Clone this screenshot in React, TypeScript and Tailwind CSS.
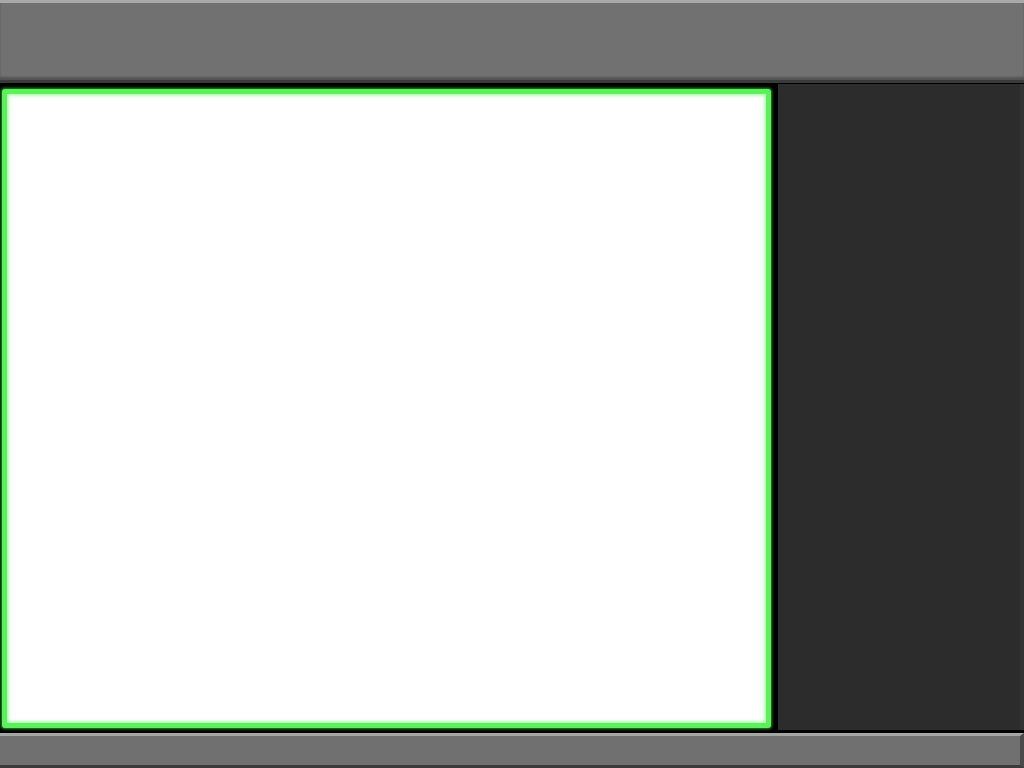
export default function App() {
  return (
    <div className="flex h-[768px] w-[1024px] flex-col overflow-hidden bg-black font-['Liberation_Sans',sans-serif]">
      {/* top toolbar */}
      <div className="h-[83px] shrink-0 border-t-[3px] border-t-[#a9a9a9] border-b-[3px] border-b-[#3a3a3a] bg-[#717171] shadow-[inset_0_-3px_2px_rgba(0,0,0,0.25)]" />

      <div className="flex min-h-0 flex-1 pt-[1px]">
        {/* canvas */}
        <div className="flex min-w-0 flex-1 pl-[2px] pr-[7px] pt-[5px] pb-[5px]">
          <div className="flex-1 rounded-[3px] border-[5px] border-[#5cf05c] bg-white shadow-[0_0_3px_1px_#2a9a2a,inset_0_0_3px_2px_#b0ffb0]" />
        </div>
        {/* side panel */}
        <div className="mb-[3px] w-[246px] shrink-0 border-r-[4px] border-r-[#333333] bg-[#2c2c2c]" />
      </div>

      {/* bottom status bar */}
      <div className="h-[35px] shrink-0 border-t-[3px] border-t-[#a5a5a5] border-b-[3px] border-b-[#3c3c3c] border-r-[4px] border-r-[#4a4a4a] bg-[#707070]" />
    </div>
  );
}
